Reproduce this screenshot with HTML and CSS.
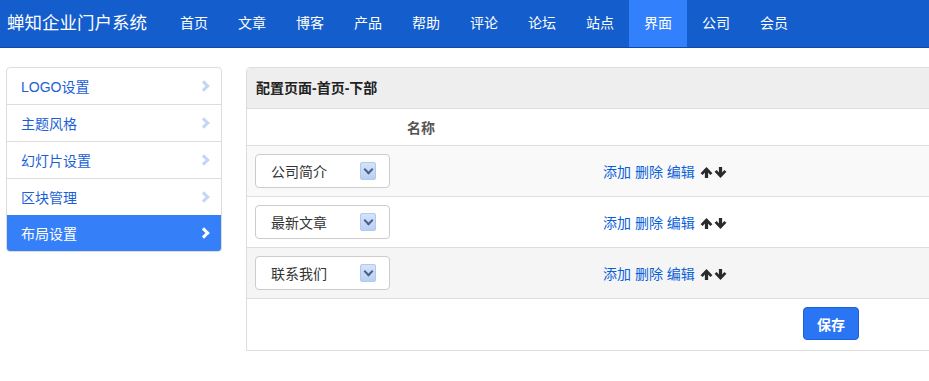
FILE: index.html
```html
<!DOCTYPE html>
<html lang="zh-CN">
<head>
    <meta charset="UTF-8">
    <meta name="viewport" content="width=device-width, initial-scale=1.0">
    <title>界面 - 布局设置</title>
    <link rel="stylesheet" href="styles.css">
</head>
<body>
    <header class="navbar">
        <a class="brand" href="#">蝉知企业门户系统</a>
        <ul class="nav">
            <li><a href="#">首页</a></li>
            <li><a href="#">文章</a></li>
            <li><a href="#">博客</a></li>
            <li><a href="#">产品</a></li>
            <li><a href="#">帮助</a></li>
            <li><a href="#">评论</a></li>
            <li><a href="#">论坛</a></li>
            <li><a href="#">站点</a></li>
            <li class="active"><a href="#">界面</a></li>
            <li><a href="#">公司</a></li>
            <li><a href="#">会员</a></li>
        </ul>
    </header>

    <div class="layout">
        <ul class="side-menu">
            <li><a href="#">LOGO设置<span class="chevron"></span></a></li>
            <li><a href="#">主题风格<span class="chevron"></span></a></li>
            <li><a href="#">幻灯片设置<span class="chevron"></span></a></li>
            <li><a href="#">区块管理<span class="chevron"></span></a></li>
            <li class="active"><a href="#">布局设置<span class="chevron"></span></a></li>
        </ul>

        <div class="panel">
            <div class="panel-heading">配置页面-首页-下部</div>
            <table class="table">
                <thead>
                    <tr>
                        <th class="col-name">名称</th>
                        <th></th>
                    </tr>
                </thead>
                <tbody>
                    <tr class="odd">
                        <td>
                            <div class="select"><span>公司简介</span><i class="caret"></i></div>
                        </td>
                        <td class="actions">
                            <a href="#">添加</a> <a href="#">删除</a> <a href="#">编辑</a>
                            <svg class="arrow" viewBox="0 0 12 12"><path d="M6 1 L11.5 6.6 L9.5 8.2 L7.5 6.1 L7.5 11 L4.5 11 L4.5 6.1 L2.5 8.2 L0.5 6.6 Z"/></svg><svg class="arrow" viewBox="0 0 12 12"><path d="M6 11 L11.5 5.4 L9.5 3.8 L7.5 5.9 L7.5 1 L4.5 1 L4.5 5.9 L2.5 3.8 L0.5 5.4 Z"/></svg>
                        </td>
                    </tr>
                    <tr>
                        <td>
                            <div class="select"><span>最新文章</span><i class="caret"></i></div>
                        </td>
                        <td class="actions">
                            <a href="#">添加</a> <a href="#">删除</a> <a href="#">编辑</a>
                            <svg class="arrow" viewBox="0 0 12 12"><path d="M6 1 L11.5 6.6 L9.5 8.2 L7.5 6.1 L7.5 11 L4.5 11 L4.5 6.1 L2.5 8.2 L0.5 6.6 Z"/></svg><svg class="arrow" viewBox="0 0 12 12"><path d="M6 11 L11.5 5.4 L9.5 3.8 L7.5 5.9 L7.5 1 L4.5 1 L4.5 5.9 L2.5 3.8 L0.5 5.4 Z"/></svg>
                        </td>
                    </tr>
                    <tr class="hover">
                        <td>
                            <div class="select"><span>联系我们</span><i class="caret"></i></div>
                        </td>
                        <td class="actions">
                            <a href="#">添加</a> <a href="#">删除</a> <a href="#">编辑</a>
                            <svg class="arrow" viewBox="0 0 12 12"><path d="M6 1 L11.5 6.6 L9.5 8.2 L7.5 6.1 L7.5 11 L4.5 11 L4.5 6.1 L2.5 8.2 L0.5 6.6 Z"/></svg><svg class="arrow" viewBox="0 0 12 12"><path d="M6 11 L11.5 5.4 L9.5 3.8 L7.5 5.9 L7.5 1 L4.5 1 L4.5 5.9 L2.5 3.8 L0.5 5.4 Z"/></svg>
                        </td>
                    </tr>
                </tbody>
            </table>
            <div class="panel-footer">
                <button type="submit" class="save-btn">保存</button>
            </div>
        </div>
    </div>
</body>
</html>
```

FILE: styles.css
```css
* {
    margin: 0;
    padding: 0;
    box-sizing: border-box;
    font-family: "Liberation Sans", "Noto Sans CJK SC", sans-serif;
}

body {
    background-color: #fff;
    color: #333;
    font-size: 14px;
    overflow: hidden;
}

a {
    text-decoration: none;
}

ul {
    list-style: none;
}

/* top navigation */
.navbar {
    display: flex;
    align-items: stretch;
    height: 48px;
    background-color: #145dcc;
    border-bottom: 1px solid #0e4aa8;
}

.brand {
    display: flex;
    align-items: center;
    padding: 0 0 4px 7px;
    width: 165px;
    color: #fff;
    font-size: 17.5px;
}

.nav {
    display: flex;
}

.nav li a {
    display: flex;
    align-items: center;
    height: 47px;
    padding: 0 15px 4px;
    color: #fff;
    font-size: 14px;
}

.nav li.active a {
    background-color: #3380fc;
}

/* page body */
.layout {
    display: flex;
    align-items: flex-start;
    gap: 24px;
    padding: 19px 0 0 6px;
}

.side-menu {
    flex: none;
    width: 216px;
    border: 1px solid #ddd;
    border-radius: 4px;
    overflow: hidden;
}

.side-menu li + li {
    border-top: 1px solid #ddd;
}

.side-menu li a {
    display: flex;
    align-items: center;
    justify-content: space-between;
    height: 36px;
    padding: 0 10px 1px 14px;
    color: #1a5fd6;
    font-size: 14px;
}

.side-menu li.active a {
    height: 35px;
}

.chevron {
    width: 8px;
    height: 8px;
    border-top: 3px solid #c3d6f5;
    border-right: 3px solid #c3d6f5;
    transform: rotate(45deg);
    margin-right: 3px;
}

.side-menu li.active {
    border-top-color: #3580f9;
}

.side-menu li.active a {
    background-color: #3580f9;
    color: #fff;
}

.side-menu li.active .chevron {
    border-color: #fff;
}

/* panel */
.panel {
    flex: none;
    width: 1170px;
    border: 1px solid #ddd;
    border-radius: 4px 4px 0 0;
}

.panel-heading {
    height: 41px;
    line-height: 40px;
    padding-left: 9px;
    background-color: #eee;
    border-bottom: 1px solid #ddd;
    font-weight: bold;
    font-size: 14px;
    color: #222;
}

.table {
    width: 100%;
    border-collapse: collapse;
}

.table th {
    height: 36px;
    font-weight: bold;
    color: #555;
    text-align: center;
    border-bottom: 1px solid #ddd;
}

.table .col-name {
    width: 348px;
}

.table td {
    height: 51px;
    padding: 0 8px;
    border-bottom: 1px solid #ddd;
}

.table tr.odd td {
    background-color: #f9f9f9;
}

.table tr.hover td {
    background-color: #f5f5f5;
}

.select {
    display: flex;
    align-items: center;
    justify-content: space-between;
    width: 135px;
    height: 34px;
    padding: 0 13px 0 15px;
    background-color: #fff;
    border: 1px solid #ccc;
    border-radius: 4px;
    color: #333;
}

.caret {
    position: relative;
    width: 16px;
    height: 18px;
    background: linear-gradient(#d5e3fb, #b9cff4);
    border: 1px solid #b3c8ee;
    border-radius: 2px;
}

.caret::after {
    content: "";
    position: absolute;
    left: 4px;
    top: 3px;
    width: 5px;
    height: 5px;
    border-right: 2px solid #4d6185;
    border-bottom: 2px solid #4d6185;
    transform: rotate(45deg);
}

.actions {
    color: #1a5fd6;
    white-space: nowrap;
}

.actions a {
    color: #0b5fd8;
}

.arrow {
    width: 13px;
    height: 13px;
    margin-left: 1px;
    fill: #2a2a2a;
    vertical-align: -2px;
}

.panel-footer {
    height: 51px;
    display: flex;
    align-items: center;
    justify-content: center;
    padding-bottom: 1px;
}

.save-btn {
    width: 56px;
    height: 33px;
    background-color: #2a75f3;
    border: 1px solid #1b62d8;
    border-radius: 4px;
    color: #fff;
    font-weight: bold;
    font-size: 14px;
    cursor: pointer;
}
```
